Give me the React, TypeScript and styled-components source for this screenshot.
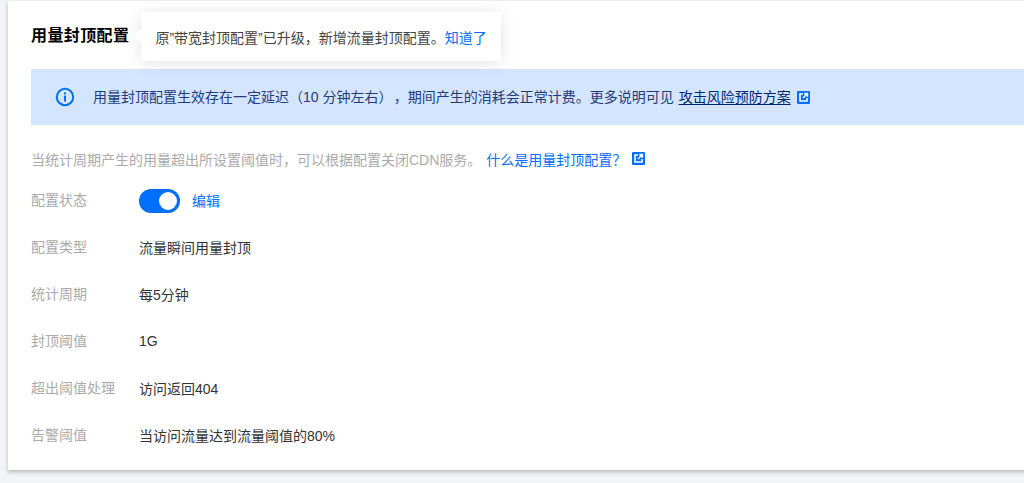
import React from "react";
import styled, { createGlobalStyle } from "styled-components";

const Global = createGlobalStyle`
  html, body { margin: 0; padding: 0; background: #f3f4f7; overflow: hidden; }
  body { font-family: "Liberation Sans", "Noto Sans CJK SC", sans-serif; font-size: 14px; }
`;

const Page = styled.div`
  width: 1024px;
  height: 483px;
  padding: 1px 0 0 8px;
  box-sizing: border-box;
  overflow: hidden;
`;

const Card = styled.section`
  width: 1040px;
  height: 469px;
  box-sizing: border-box;
  background: #fff;
  padding: 0 0 0 23px;
  box-shadow: 0 2px 4px rgba(54, 58, 80, 0.32);
`;

const Header = styled.header`
  display: flex;
  align-items: center;
  height: 68px;
  gap: 12px;
`;

const Title = styled.h2`
  margin: 2px 0 0;
  font-size: 16px;
  line-height: 24px;
  font-weight: 700;
  color: #000;
  letter-spacing: 0.4px;
`;

const Popover = styled.div`
  position: relative;
  display: flex;
  align-items: center;
  width: 360px;
  height: 49px;
  margin-top: 3px;
  padding-left: 14px;
  box-sizing: border-box;
  background: #fff;
  color: #444;
  white-space: nowrap;
  box-shadow: 0 2px 16px rgba(54, 58, 80, 0.14);
  &::before {
    content: "";
    position: absolute;
    left: -5px;
    top: 19px;
    width: 10px;
    height: 10px;
    background: #fff;
    transform: rotate(45deg);
  }
`;

const Link = styled.a`
  color: #006eff;
  text-decoration: none;
`;

const Alert = styled.div`
  display: flex;
  align-items: center;
  height: 56px;
  padding-left: 24px;
  gap: 18px;
  background: #d4e5ff;
  color: #1f3b78;
  white-space: pre;
`;

const AlertText = styled.span`
  margin-top: -2px;
`;

const AlertLink = styled.a`
  color: #00256b;
  text-decoration: underline;
  text-underline-offset: 2px;
  margin-left: 5px;
`;

const Description = styled.p`
  display: flex;
  align-items: center;
  margin: 25px 0 0;
  height: 17px;
  color: #aaa;
  white-space: nowrap;
`;

const DescLink = styled(Link)`
  margin-left: 5px;
`;

const ExternalIcon = styled.svg`
  width: 13px;
  height: 13px;
  margin-left: 6px;
  vertical-align: -2px;
`;

const Rows = styled.dl`
  margin: 9px 0 0;
  display: grid;
  grid-template-columns: 108px 1fr;
  grid-auto-rows: 47px;
`;

const Label = styled.dt`
  display: flex;
  align-items: center;
  color: #aaa;
  margin-top: -2px;
`;

const Value = styled.dd`
  margin: 0;
  display: flex;
  align-items: center;
  color: #333;
`;

const Switch = styled.span`
  position: relative;
  top: 1px;
  display: inline-block;
  width: 41px;
  height: 24px;
  border-radius: 12px;
  background: #006eff;
  margin-right: 12px;
  &::after {
    content: "";
    position: absolute;
    top: 3px;
    right: 3px;
    width: 18px;
    height: 18px;
    border-radius: 50%;
    background: #fff;
  }
`;

const InfoIcon = styled.svg`
  width: 20px;
  height: 20px;
  flex: none;
`;

const External = () => (
  <ExternalIcon viewBox="0 0 13 13" aria-hidden="true">
    <rect width="13" height="13" rx="1" fill="#006eff" />
    <path d="M6 3H3v7h7V7" fill="none" stroke="#fff" strokeWidth="1.6" />
    <path d="M6 7l4-4M7.2 2.6h3.2v3.2" fill="none" stroke="#fff" strokeWidth="1.6" />
  </ExternalIcon>
);

const rows: [string, string][] = [
  ["配置类型", "流量瞬间用量封顶"],
  ["统计周期", "每5分钟"],
  ["封顶阈值", "1G"],
  ["超出阈值处理", "访问返回404"],
  ["告警阈值", "当访问流量达到流量阈值的80%"],
];

export default function App() {
  return (
    <Page>
      <Global />
      <Card>
        <Header>
          <Title>用量封顶配置</Title>
          <Popover>
            {"原\u201d带宽封顶配置\u201d已升级\uff0c新增流量封顶配置。"}
            <Link href="#">知道了</Link>
          </Popover>
        </Header>
        <Alert>
          <InfoIcon viewBox="0 0 20 20" aria-hidden="true">
            <circle cx="10" cy="10" r="8.2" fill="none" stroke="#006eff" strokeWidth="2" />
            <rect x="9" y="8.6" width="2" height="6" fill="#006eff" />
            <rect x="9" y="5.4" width="2" height="2" fill="#006eff" />
          </InfoIcon>
          <AlertText>
            {"用量封顶配置生效存在一定延迟\uff0810 分钟左右\uff09\u200a\uff0c期间产生的消耗会正常计费。更多说明可见"}
            <AlertLink href="#">攻击风险预防方案</AlertLink>
            <External />
          </AlertText>
        </Alert>
        <Description>
          {"当统计周期产生的用量超出所设置阈值时\uff0c可以根据配置关闭CDN服务。"}
          <DescLink href="#">{"什么是用量封顶配置\uff1f"}</DescLink>
          <External />
        </Description>
        <Rows>
          <Label>配置状态</Label>
          <Value>
            <Switch />
            <Link href="#">编辑</Link>
          </Value>
          {rows.map(([k, v]) => (
            <React.Fragment key={k}>
              <Label>{k}</Label>
              <Value>{v}</Value>
            </React.Fragment>
          ))}
        </Rows>
      </Card>
    </Page>
  );
}
